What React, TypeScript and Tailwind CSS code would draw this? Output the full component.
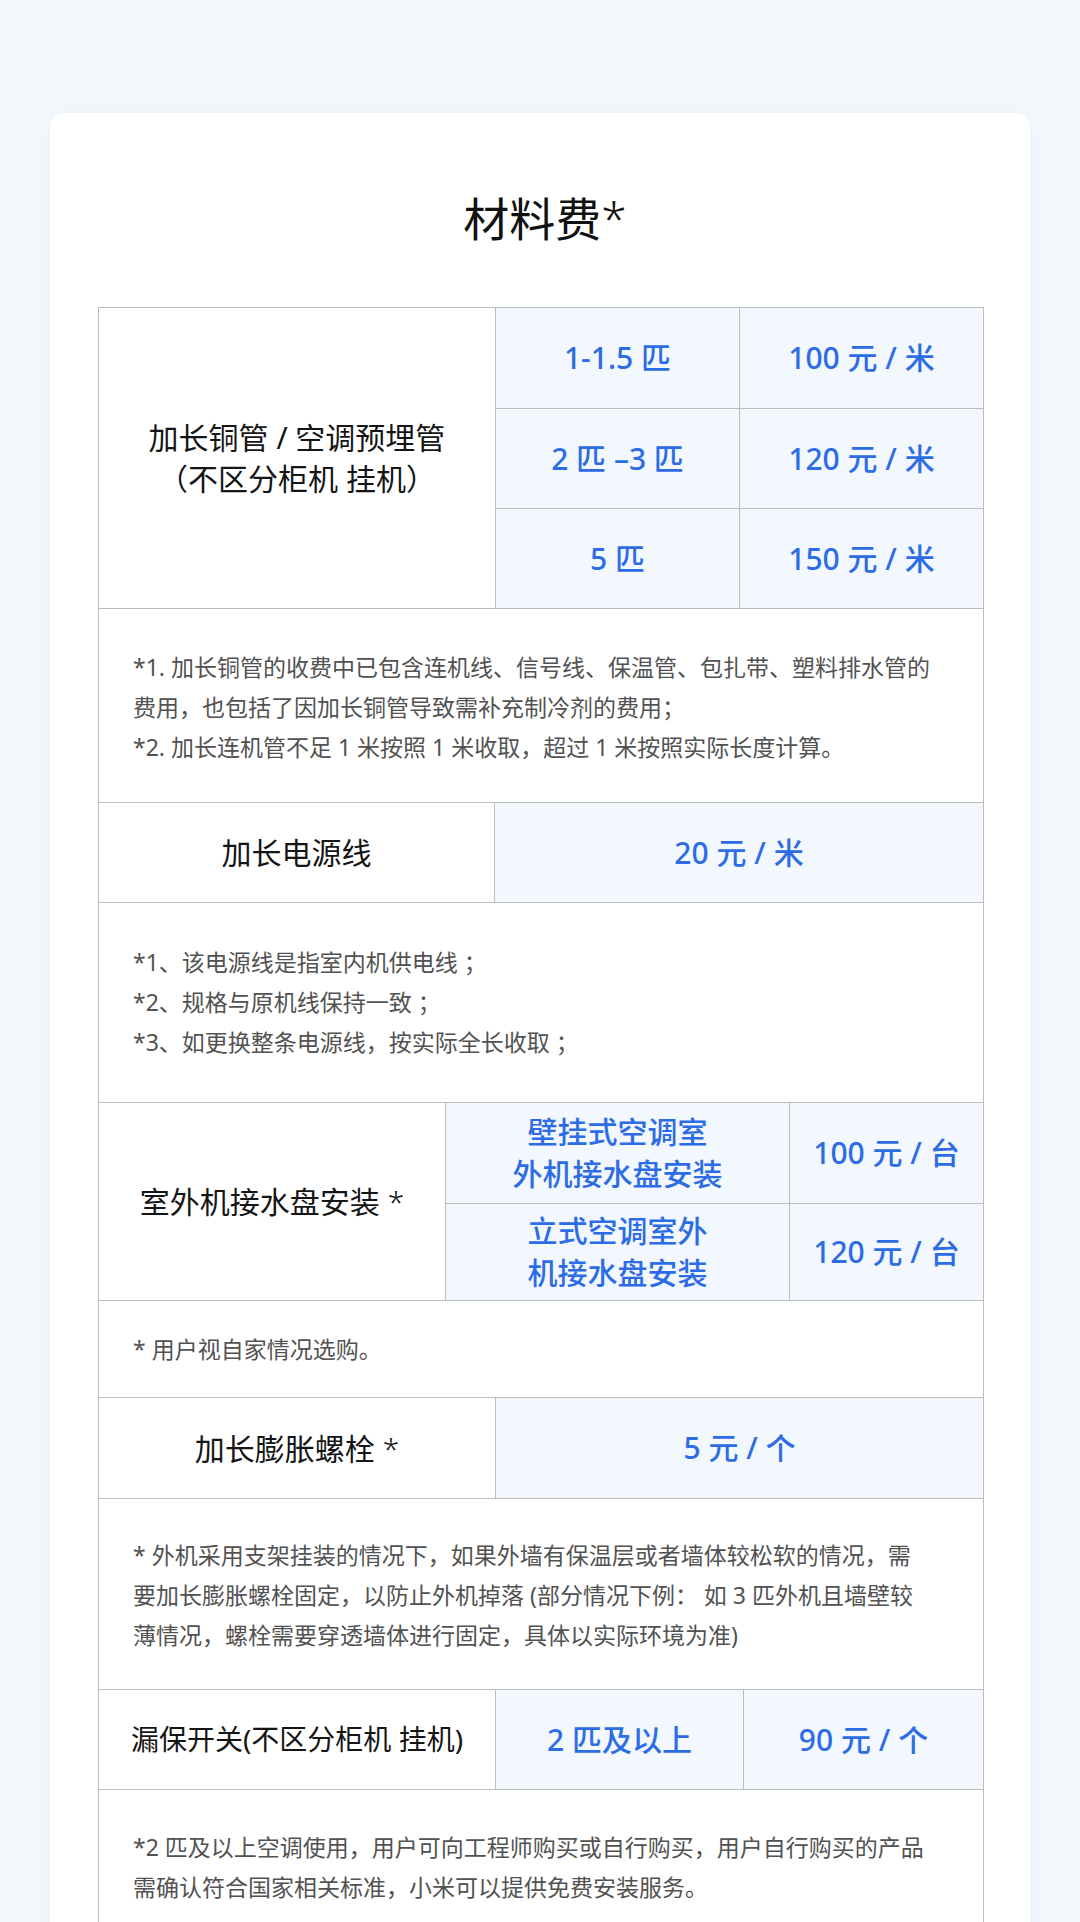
import React from "react";

const blueCell =
  "flex items-center justify-center text-center bg-[#f3f7fe] text-[#2c6ce5] text-[30px] font-medium leading-[42px]";
const labelBase = "flex items-center justify-center text-center text-[#151515] leading-[41px]";
const labelCell = `${labelBase} text-[30px]`;
const noteText = "text-[#525252] text-[23px] leading-[40px] whitespace-nowrap";

export default function App() {
  return (
    <div className="min-h-[1922px] bg-[#f4f8fd] px-[50px] pt-[113px] font-[family-name:'Noto_Sans','Noto_Sans_CJK_SC',sans-serif]">
      <div className="rounded-[14px] bg-white pb-[80px] pl-[48px] pr-[46px] pt-[80px] shadow-[0_0_14px_rgba(40,90,160,0.05)]">
        <h1 className="mb-[64px] pl-[8px] text-center text-[46px] font-normal leading-[50px] text-[#111111]">
          材料费<span className="font-light">*</span>
        </h1>

        <div className="w-[886px] border border-[#bdbdbd]">
          {/* Section A */}
          <div className="flex h-[300px]">
            <div className={`${labelCell} w-[397px] border-r border-[#bdbdbd]`}>
              <span>
                加长铜管 / 空调预埋管
                <br />
                （不区分柜机 挂机）
              </span>
            </div>
            <div className="flex flex-1 flex-col">
              <div className="flex h-[100px]">
                <div className={`${blueCell} w-[244px] border-r border-[#bdbdbd]`}>1-1.5 匹</div>
                <div className={`${blueCell} flex-1`}>100 元 / 米</div>
              </div>
              <div className="flex h-[100px] border-t border-[#bdbdbd]">
                <div className={`${blueCell} w-[244px] border-r border-[#bdbdbd]`}>2 匹 –3 匹</div>
                <div className={`${blueCell} flex-1`}>120 元 / 米</div>
              </div>
              <div className="flex flex-1 border-t border-[#bdbdbd]">
                <div className={`${blueCell} w-[244px] border-r border-[#bdbdbd]`}>5 匹</div>
                <div className={`${blueCell} flex-1`}>150 元 / 米</div>
              </div>
            </div>
          </div>

          {/* Note 1 */}
          <div className="border-t border-[#bdbdbd] pb-[35px] pl-[34px] pt-[38px]">
            <p className={noteText}>
              *1. 加长铜管的收费中已包含连机线、信号线、保温管、包扎带、塑料排水管的
              <br />
              费用，也包括了因加长铜管导致需补充制冷剂的费用；
              <br />
              *2. 加长连机管不足 1 米按照 1 米收取，超过 1 米按照实际长度计算。
            </p>
          </div>

          {/* 加长电源线 */}
          <div className="flex h-[100px] border-t border-[#bdbdbd]">
            <div className={`${labelCell} w-[396px] border-r border-[#bdbdbd]`}>加长电源线</div>
            <div className={`${blueCell} flex-1`}>20 元 / 米</div>
          </div>

          {/* Note 2 */}
          <div className="border-t border-[#bdbdbd] pb-[40px] pl-[34px] pt-[39px]">
            <p className={noteText}>
              *1、该电源线是指室内机供电线 ；
              <br />
              *2、规格与原机线保持一致 ；
              <br />
              *3、如更换整条电源线，按实际全长收取 ；
            </p>
          </div>

          {/* 室外机接水盘安装 */}
          <div className="flex h-[198px] border-t border-[#bdbdbd]">
            <div className={`${labelCell} w-[347px] border-r border-[#bdbdbd]`}>
              <span>
                室外机接水盘安装 <span className="font-light">*</span>
              </span>
            </div>
            <div className="flex flex-1 flex-col">
              <div className="flex h-[100px]">
                <div className={`${blueCell} w-[344px] border-r border-[#bdbdbd]`}>
                  <span>
                    壁挂式空调室
                    <br />
                    外机接水盘安装
                  </span>
                </div>
                <div className={`${blueCell} flex-1`}>100 元 / 台</div>
              </div>
              <div className="flex flex-1 border-t border-[#bdbdbd]">
                <div className={`${blueCell} w-[344px] border-r border-[#bdbdbd]`}>
                  <span>
                    立式空调室外
                    <br />
                    机接水盘安装
                  </span>
                </div>
                <div className={`${blueCell} flex-1`}>120 元 / 台</div>
              </div>
            </div>
          </div>

          {/* Note 4 */}
          <div className="border-t border-[#bdbdbd] pb-[28px] pl-[34px] pt-[28px]">
            <p className={noteText}>* 用户视自家情况选购。</p>
          </div>

          {/* 加长膨胀螺栓 */}
          <div className="flex h-[101px] border-t border-[#bdbdbd]">
            <div className={`${labelCell} w-[397px] border-r border-[#bdbdbd]`}>
              <span>
                加长膨胀螺栓 <span className="font-light">*</span>
              </span>
            </div>
            <div className={`${blueCell} flex-1`}>5 元 / 个</div>
          </div>

          {/* Note 3 */}
          <div className="border-t border-[#bdbdbd] pb-[34px] pl-[34px] pt-[36px]">
            <p className={noteText}>
              * 外机采用支架挂装的情况下，如果外墙有保温层或者墙体较松软的情况，需
              <br />
              要加长膨胀螺栓固定，以防止外机掉落 (部分情况下例： 如 3 匹外机且墙壁较
              <br />
              薄情况，螺栓需要穿透墙体进行固定，具体以实际环境为准)
            </p>
          </div>

          {/* 漏保开关 */}
          <div className="flex h-[100px] border-t border-[#bdbdbd]">
            <div className={`${labelBase} w-[397px] border-r border-[#bdbdbd] text-[28px]`}>
              漏保开关(不区分柜机 挂机)
            </div>
            <div className={`${blueCell} w-[248px] border-r border-[#bdbdbd]`}>2 匹及以上</div>
            <div className={`${blueCell} flex-1`}>90 元 / 个</div>
          </div>

          {/* Note 5 */}
          <div className="border-t border-[#bdbdbd] pb-[36px] pl-[34px] pt-[37px]">
            <p className={noteText}>
              *2 匹及以上空调使用，用户可向工程师购买或自行购买，用户自行购买的产品
              <br />
              需确认符合国家相关标准，小米可以提供免费安装服务。
            </p>
          </div>
        </div>
      </div>
    </div>
  );
}
